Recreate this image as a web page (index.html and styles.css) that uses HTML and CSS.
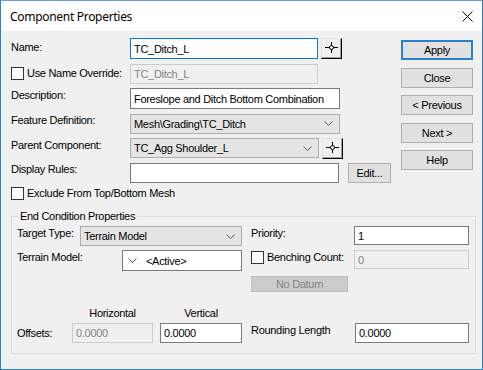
FILE: index.html
```html
<!DOCTYPE html>
<html>
<head>
<meta charset="utf-8">
<link rel="stylesheet" href="styles.css">
</head>
<body>
<div class="window">
  <div class="titlebar">
    <span class="title">Component Properties</span>
    <svg class="close" width="11" height="11" viewBox="0 0 11 11"><path d="M0.5 0.5 L10.5 10.5 M10.5 0.5 L0.5 10.5" stroke="#000" stroke-width="1" fill="none"/></svg>
  </div>
  <div class="content">
    <div class="top">
      <div class="form">
        <div class="row r-name">
          <span class="lbl lbl-name">Name:</span>
          <div class="input focus w-name">TC_Ditch_L</div>
          <button class="pick"><svg width="13" height="11" viewBox="0 0 13 11"><path d="M0 5.5 H13 M6.5 0 V11" stroke="#000" fill="none"/><circle cx="6.5" cy="5.5" r="2" fill="#f0f0f0" stroke="#000"/></svg></button>
        </div>
        <div class="row">
          <span class="lbl chk-lbl"><span class="check"></span>Use Name Override:</span>
          <div class="input disabled w-name">TC_Ditch_L</div>
        </div>
        <div class="row r-desc">
          <span class="lbl">Description:</span>
          <div class="input w-wide">Foreslope and Ditch Bottom Combination</div>
        </div>
        <div class="row">
          <span class="lbl">Feature Definition:</span>
          <div class="select w-wide"><span>Mesh\Grading\TC_Ditch</span><svg class="chev" width="9" height="5" viewBox="0 0 9 5"><path d="M0.5 0.5 L4.5 4.5 L8.5 0.5" fill="none" stroke="#555"/></svg></div>
        </div>
        <div class="row">
          <span class="lbl">Parent Component:</span>
          <div class="select w-parent"><span>TC_Agg Shoulder_L</span><svg class="chev" width="9" height="5" viewBox="0 0 9 5"><path d="M0.5 0.5 L4.5 4.5 L8.5 0.5" fill="none" stroke="#555"/></svg></div>
          <button class="pick"><svg width="13" height="11" viewBox="0 0 13 11"><path d="M0 5.5 H13 M6.5 0 V11" stroke="#000" fill="none"/><circle cx="6.5" cy="5.5" r="2" fill="#f0f0f0" stroke="#000"/></svg></button>
        </div>
        <div class="row">
          <span class="lbl">Display Rules:</span>
          <div class="input w-display"></div>
          <button class="btn btn-edit">Edit...</button>
        </div>
        <div class="row r-exclude">
          <span class="chk-lbl"><span class="check"></span>Exclude From Top/Bottom Mesh</span>
        </div>
      </div>
      <div class="buttons">
        <button class="btn side default">Apply</button>
        <button class="btn side">Close</button>
        <button class="btn side">&lt; Previous</button>
        <button class="btn side">Next &gt;</button>
        <button class="btn side">Help</button>
      </div>
    </div>
    <div class="group">
      <span class="legend">End Condition Properties</span>
      <div class="gb-grid">
        <div class="cell l1">
          <span class="glbl w-tt">Target Type:</span>
          <div class="select grow"><span>Terrain Model</span><svg class="chev" width="9" height="5" viewBox="0 0 9 5"><path d="M0.5 0.5 L4.5 4.5 L8.5 0.5" fill="none" stroke="#555"/></svg></div>
        </div>
        <div class="cell r1">
          <span class="glbl w-pr">Priority:</span>
          <div class="input w-right">1</div>
        </div>
        <div class="cell l2">
          <span class="glbl w-tm">Terrain Model:</span>
          <div class="input grow terrain"><svg class="chev-l" width="9" height="5" viewBox="0 0 9 5"><path d="M0.5 0.5 L4.5 4.5 L8.5 0.5" fill="none" stroke="#555"/></svg><span>&lt;Active&gt;</span></div>
        </div>
        <div class="cell r2">
          <span class="chk-lbl glbl-c"><span class="check"></span>Benching Count:</span>
          <div class="input disabled w-right push">0</div>
        </div>
        <div class="cell r3">
          <button class="btn nodatum">No Datum</button>
        </div>
        <div class="cell l4">
          <span class="hdr w-h">Horizontal</span>
          <span class="hdr w-v">Vertical</span>
        </div>
        <div class="cell l5">
          <span class="glbl w-off center">Offsets:</span>
          <div class="input disabled w-h">0.0000</div>
          <div class="input w-v">0.0000</div>
        </div>
        <div class="cell r5">
          <span class="glbl">Rounding Length</span>
          <div class="input w-round push">0.0000</div>
        </div>
      </div>
    </div>
  </div>
</div>
</body>
</html>
```

FILE: styles.css
```css
* { box-sizing: border-box; }

body {
  margin: 0;
  font-family: "Liberation Sans", Arial, sans-serif;
  font-size: 11px;
  letter-spacing: -0.3px;
  color: #000;
}

.window {
  width: 483px;
  height: 370px;
  border: 1px solid #2b7fd1;
  border-top-color: #6b9fd6;
  background: #f0f0f0;
  display: flex;
  flex-direction: column;
}

.titlebar {
  height: 30px;
  flex: none;
  background: #fff;
  display: flex;
  align-items: center;
  justify-content: space-between;
  padding: 0 9px 0 9px;
}

.title {
  font-family: "Noto Sans", "Open Sans", sans-serif;
  font-size: 12px;
  letter-spacing: -0.3px;
  color: #000;
}

.close { display: block; }

.content {
  padding: 7px 6px 0 10px;
}

.top {
  display: flex;
  justify-content: space-between;
}

.form {
  display: flex;
  flex-direction: column;
  gap: 4.5px;
}

.row {
  display: flex;
  height: 20px;
}

.r-name, .r-desc { height: 21px; }

.r-exclude { height: 13px; }

.lbl {
  width: 119px;
  flex: none;
  line-height: 13px;
  padding-top: 0.5px;
  white-space: nowrap;
}

.lbl-name { padding-top: 2.5px; }

.chk-lbl {
  display: flex;
  align-items: center;
  line-height: 13px;
  white-space: nowrap;
}

.check {
  width: 13px;
  height: 13px;
  border: 1px solid #333;
  background: #fff;
  margin-right: 3px;
  flex: none;
}

.input, .select {
  height: 100%;
  border: 1px solid #7a7a7a;
  background: #fff;
  display: flex;
  align-items: center;
  padding: 0 3px;
  white-space: nowrap;
  overflow: hidden;
}

.input.focus { border-color: #0078d7; }

.input.disabled {
  background: #f0f0f0;
  border-color: #cccccc;
  color: #838383;
}

.select {
  background: #e5e5e5;
  border-color: #acacac;
  justify-content: space-between;
  padding-right: 6px;
}

.chev { flex: none; }

.w-name { width: 188px; }
.w-wide { width: 210px; }
.w-parent { width: 189px; }
.w-display { width: 209px; }

.pick {
  width: 21px;
  height: 21px;
  margin-left: 3px;
  padding: 0;
  background: #f0f0f0;
  border: 1px solid;
  border-color: #e3e3e3 #000 #000 #e3e3e3;
  box-shadow: inset -1px -1px 0 #a0a0a0;
  display: flex;
  align-items: center;
  justify-content: center;
  padding-bottom: 2px;
  padding-right: 1px;
}

.pick svg { display: block; }

.btn {
  font-family: inherit;
  font-size: 11px;
  letter-spacing: -0.3px;
  color: #000;
  background: #e1e1e1;
  border: 1px solid #adadad;
  padding: 0;
  display: flex;
  align-items: center;
  justify-content: center;
}

.btn-edit {
  width: 43px;
  height: 20px;
  margin-left: 9px;
}

.buttons {
  display: flex;
  flex-direction: column;
  gap: 7.5px;
  padding-top: 2px;
  margin-right: 3px;
}

.side {
  width: 72px;
  height: 20px;
}

.side.default {
  border: 2px solid #2a7fd0;
}

.group {
  margin-top: 16px;
  border: 1px solid #dcdcdc;
  padding: 0 6px 10px 5px;
}

.legend {
  display: table;
  height: 13px;
  line-height: 13px;
  margin: -7px 0 0 1px;
  padding: 0 2px;
  background: #f0f0f0;
}

.gb-grid {
  margin-top: 3px;
  display: grid;
  grid-template-columns: 225px 218px;
  column-gap: 9px;
  grid-template-rows: 20px 4px 21px 5px 16px 31px 20px;
}

.cell { display: flex; }

.l1 { grid-column: 1; grid-row: 1; }
.r1 { grid-column: 2; grid-row: 1; }
.l2 { grid-column: 1; grid-row: 3; }
.r2 { grid-column: 2; grid-row: 3; height: 20px; }
.r3 { grid-column: 2; grid-row: 5; }
.l4 { grid-column: 1; grid-row: 6; padding-left: 55px; gap: 7px; align-items: flex-end; padding-bottom: 3px; }
.l5 { grid-column: 1; grid-row: 7; gap: 0; }
.r5 { grid-column: 2; grid-row: 7; }

.glbl {
  flex: none;
  line-height: 13px;
  padding-top: 0.5px;
  white-space: nowrap;
}

.glbl.center { align-self: center; padding-top: 0; }

.glbl-c { align-self: flex-start; padding-top: 0.5px; }

.w-tt { width: 63px; }
.w-pr { width: 103px; }
.w-tm { width: 105px; }
.w-off { width: 55px; }

.grow { flex: 1; }

.w-right { width: 115px; height: 19px; }
.w-round { width: 114px; }
.push { margin-left: auto; }

.w-h { width: 81px; flex: none; }
.w-v { width: 82px; flex: none; }
.l5 .w-v { margin-left: 7px; }

.hdr {
  text-align: center;
  line-height: 13px;
}

.terrain { padding-left: 5px; }
.chev-l { flex: none; margin-right: 9px; }

.nodatum {
  width: 97px;
  height: 16px;
  background: #cccccc;
  border-color: #bfbfbf;
  color: #838383;
}
```
